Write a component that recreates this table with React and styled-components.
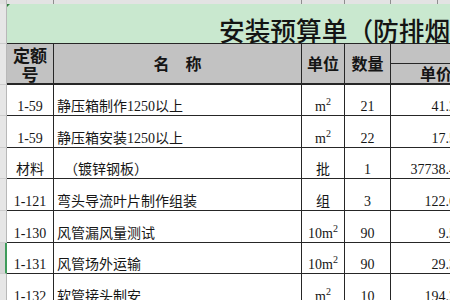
import React from "react";
import styled, { createGlobalStyle } from "styled-components";

const GlobalStyle = createGlobalStyle`
  html, body { margin: 0; padding: 0; background: #ffffff; overflow: hidden; }
  body { font-family: "Liberation Serif", "Noto Sans CJK SC", serif; color: #111; }
`;

const LINE = "#262626";

const Viewport = styled.div`
  width: 450px;
  height: 300px;
  overflow: hidden;
`;

const Sheet = styled.div`
  display: grid;
  grid-template-columns: 7px 47px 248px 43px 46px 80px;
  grid-template-rows: 4px 40px 20px 21px 31px 32px 31px 32px 32px 31px 32px;
  width: 471px;
`;

const Corner = styled.div`
  background: #dedede;
  border-right: 1px solid #b5b5b5;
  box-sizing: border-box;
`;

const ColumnStrip = styled.div`
  grid-column: 2 / -1;
  display: flex;
  background: #e3e3e3;
`;

const StripCell = styled.div`
  flex: 0 0 ${(p) => p.$w}px;
  box-sizing: border-box;
  border-right: 1px solid #8f8f8f;
`;

const RowHead = styled.div`
  grid-row: span ${(p) => p.$span || 1};
  box-sizing: border-box;
  background: ${(p) => (p.$selected ? "#d6d6d6" : "#e6e6e6")};
  border-right: ${(p) => (p.$selected ? "2px solid #3f9b5b" : "1px solid #b8b8b8")};
  border-bottom: 1px solid #cdcdcd;
`;

const TitleCell = styled.div`
  grid-column: 2 / -1;
  position: relative;
  box-sizing: border-box;
  background: #c9e8cf;
  border-bottom: 1px solid ${LINE};
  display: flex;
  align-items: flex-end;
  padding: 0 0 1px 212px;
  font-family: "Noto Sans CJK SC", sans-serif;
  font-weight: 500;
  font-size: 25.7px;
  line-height: 25px;
  white-space: nowrap;
  color: #141414;

  &::before {
    content: "";
    position: absolute;
    left: 0;
    top: 0;
    border-top: 3px solid #2f7d3f;
    border-right: 3px solid transparent;
  }
`;

const HeadCell = styled.div`
  grid-row: span ${(p) => p.$span || 1};
  box-sizing: border-box;
  background: #c2c2c2;
  border-right: 1px solid ${LINE};
  border-bottom: ${(p) => (p.$thick ? 2 : 1)}px solid ${LINE};
  display: flex;
  align-items: center;
  justify-content: ${(p) => p.$justify || "center"};
  padding: 0 0 0 ${(p) => p.$pl || 0}px;
  font-family: "Noto Sans CJK SC", sans-serif;
  font-weight: 700;
  font-size: ${(p) => p.$size || 16}px;
  line-height: 19px;
  text-align: center;
  white-space: pre;
  color: #151515;
`;

const Wrap = styled.span`
  white-space: normal;
  width: 36px;
`;

const Cell = styled.div`
  box-sizing: border-box;
  border-right: 1px solid ${LINE};
  border-bottom: 1px solid ${LINE};
  display: flex;
  align-items: flex-end;
  justify-content: ${(p) =>
    p.$align === "left" ? "flex-start" : p.$align === "right" ? "flex-end" : "center"};
  padding: 0 ${(p) => (p.$align === "right" ? 7 : 3)}px 1px 3px;
  font-size: 14px;
  line-height: 14px;
  white-space: pre;
  overflow: hidden;
  color: #161616;
`;

const CellText = styled.span`
  display: block;
`;

const Sup = styled.span`
  font-size: 10px;
  line-height: 0;
  vertical-align: 6px;
`;

const rows = [
  { code: "1-59", name: "静压箱制作1250以上", unit: { pre: "", sup: true }, qty: "21", price: "41.26" },
  { code: "1-59", name: "静压箱安装1250以上", unit: { pre: "", sup: true }, qty: "22", price: "17.53" },
  { code: "材料", name: "  （镀锌钢板）", unit: { text: "批" }, qty: "1", price: "37738.40" },
  { code: "1-121", name: "弯头导流叶片制作组装", unit: { text: "组" }, qty: "3", price: "122.63" },
  { code: "1-130", name: "风管漏风量测试", unit: { pre: "10", sup: true }, qty: "90", price: "9.58" },
  { code: "1-131", name: "风管场外运输", unit: { pre: "10", sup: true }, qty: "90", price: "29.36", selected: true },
  { code: "1-132", name: "软管接头制安", unit: { pre: "", sup: true }, qty: "10", price: "194.25" },
];

function Unit({ unit }) {
  if (unit.text) return unit.text;
  return (
    <>
      {unit.pre}m<Sup>2</Sup>
    </>
  );
}

export default function App() {
  return (
    <>
      <GlobalStyle />
      <Viewport>
        <Sheet>
          <Corner />
          <ColumnStrip>
            {[47, 248, 43, 46, 47, 40].map((w, i) => (
              <StripCell key={i} $w={w} />
            ))}
          </ColumnStrip>

          <RowHead />
          <TitleCell>安装预算单（防排烟工程）</TitleCell>

          <RowHead $span={2} />
          <HeadCell $span={2} $thick $size={17}>
            <Wrap>定额号</Wrap>
          </HeadCell>
          <HeadCell $span={2} $thick>名　称</HeadCell>
          <HeadCell $span={2} $thick>单位</HeadCell>
          <HeadCell $span={2} $thick>数量</HeadCell>
          <HeadCell />
          <HeadCell $thick $justify="flex-start" $pl={29}>单价</HeadCell>

          {rows.map((r, i) => (
            <React.Fragment key={i}>
              <RowHead $selected={r.selected} />
              <Cell>
                <CellText>{r.code}</CellText>
              </Cell>
              <Cell $align="left">
                <CellText>{r.name}</CellText>
              </Cell>
              <Cell>
                <CellText>
                  <Unit unit={r.unit} />
                </CellText>
              </Cell>
              <Cell>
                <CellText>{r.qty}</CellText>
              </Cell>
              <Cell $align="right">
                <CellText>{r.price}</CellText>
              </Cell>
            </React.Fragment>
          ))}
        </Sheet>
      </Viewport>
    </>
  );
}
